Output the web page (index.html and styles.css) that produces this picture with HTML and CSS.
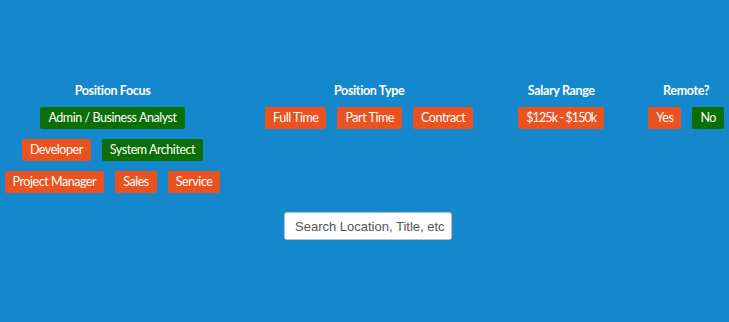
FILE: index.html
```html
<!DOCTYPE html>
<html>
<head>
<meta charset="utf-8">
<link rel="stylesheet" href="styles.css">
</head>
<body>
<div class="filters">
  <div class="group group-focus">
    <div class="title">Position Focus</div>
    <div class="tags">
      <span class="tag on">Admin / Business Analyst</span>
    </div>
    <div class="tags">
      <span class="tag">Developer</span>
      <span class="tag on">System Architect</span>
    </div>
    <div class="tags">
      <span class="tag">Project Manager</span>
      <span class="tag">Sales</span>
      <span class="tag">Service</span>
    </div>
  </div>
  <div class="group group-type">
    <div class="title">Position Type</div>
    <div class="tags">
      <span class="tag">Full Time</span>
      <span class="tag">Part Time</span>
      <span class="tag">Contract</span>
    </div>
  </div>
  <div class="group group-salary">
    <div class="title">Salary Range</div>
    <div class="tags">
      <span class="tag tag-num">$125k - $150k</span>
    </div>
  </div>
  <div class="group group-remote">
    <div class="title">Remote?</div>
    <div class="tags">
      <span class="tag">Yes</span>
      <span class="tag on">No</span>
    </div>
  </div>
</div>
<div class="search-row">
  <input class="search" type="text" placeholder="Search Location, Title, etc">
</div>
</body>
</html>
```
FILE: styles.css
```css
html, body {
  margin: 0;
  padding: 0;
  background: #1587cc;
  height: 100%;
}
body {
  font-family: Lato, "Open Sans", sans-serif;
  color: #fff;
  padding-top: 83px;
  box-sizing: border-box;
}
.filters {
  display: flex;
  align-items: flex-start;
}
.group {
  display: flex;
  flex-direction: column;
  align-items: center;
}
.group-focus { width: 225px; }
.group-type { margin-left: 40px; }
.group-salary { margin-left: 45px; }
.group-remote { margin-left: 44px; }
.title {
  font-weight: 700;
  font-size: 12.5px;
  letter-spacing: -0.35px;
  line-height: 16px;
  height: 16px;
  margin-bottom: 8px;
}
.tags {
  display: flex;
  justify-content: center;
  gap: 11px;
  margin-bottom: 10px;
}
.tag {
  display: inline-block;
  background: #ea531f;
  color: #fff;
  font-size: 12.5px;
  letter-spacing: -0.45px;
  line-height: 22px;
  height: 22px;
  padding: 0 8px;
  border-radius: 2px;
  white-space: nowrap;
}
.tag-num {
  letter-spacing: -0.9px;
}
.tag.on {
  background: #0b6f06;
}
.search-row {
  padding-left: 284px;
  margin-top: 9px;
}
.search {
  width: 168px;
  height: 28px;
  box-sizing: border-box;
  border: 1px solid #b9c3cc;
  border-radius: 3px;
  background: #fff;
  padding: 0 5px 0 10px;
  font-family: "Liberation Sans", Arial, sans-serif;
  font-size: 13px;
  color: #555;
  outline: none;
}
.search::placeholder {
  color: #555;
  opacity: 1;
}
```
